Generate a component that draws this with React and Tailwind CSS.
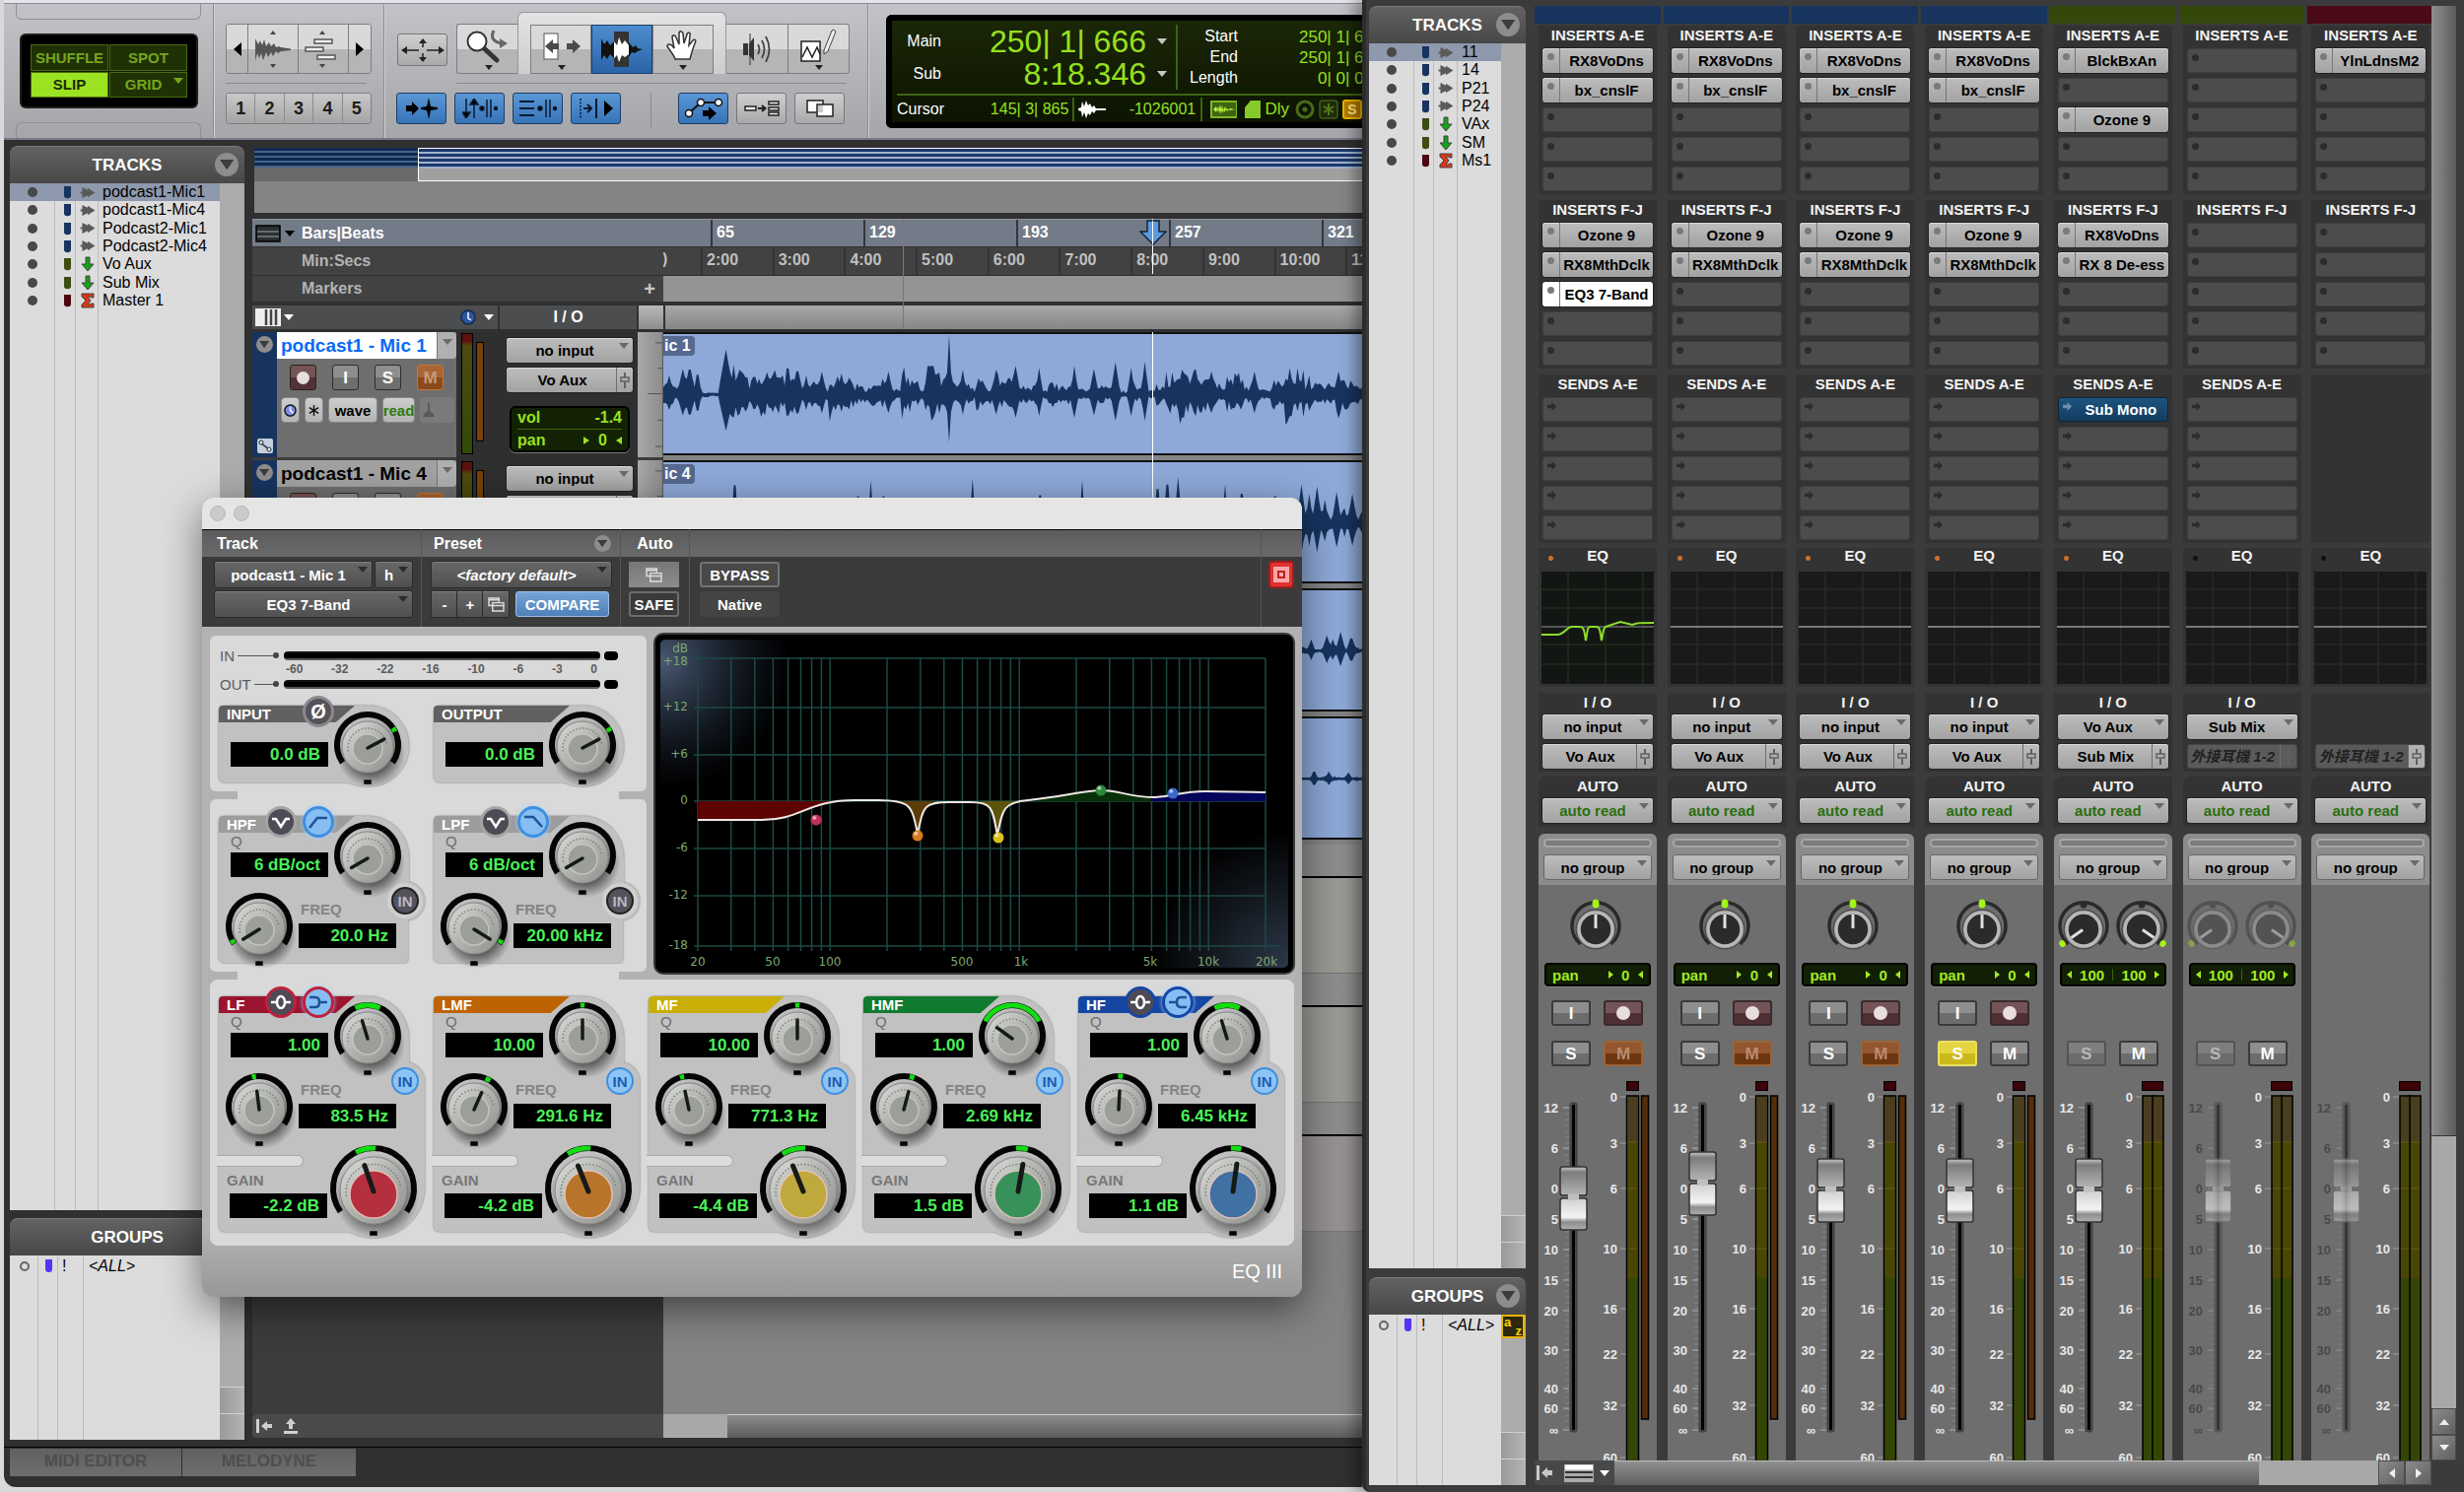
import React from 'react';

const BLUE = '#17345f';

const TRACKS = [
  { name: 'podcast1-Mic1', short: '11', kind: 'audio' },
  { name: 'podcast1-Mic4', short: '14', kind: 'audio' },
  { name: 'Podcast2-Mic1', short: 'P21', kind: 'audio' },
  { name: 'Podcast2-Mic4', short: 'P24', kind: 'audio' },
  { name: 'Vo Aux', short: 'VAx', kind: 'aux' },
  { name: 'Sub Mix', short: 'SM', kind: 'aux' },
  { name: 'Master 1', short: 'Ms1', kind: 'master' }
];

const KIND_COLORS = { audio: BLUE, aux: '#3d4d12', master: '#4c0811' };

const CHANNELS = [
  { id: 'c1', kind: 'audio', a: ['RX8VoDns', 'bx_cnslF'], f: ['Ozone 9', 'RX8MthDclk', 'EQ3 7-Band'], input: 'no input', output: 'Vo Aux', fader: 92, curve: true, led: true, muted: true },
  { id: 'c2', kind: 'audio', a: ['RX8VoDns', 'bx_cnslF'], f: ['Ozone 9', 'RX8MthDclk'], input: 'no input', output: 'Vo Aux', fader: 77, led: true, muted: true },
  { id: 'c3', kind: 'audio', a: ['RX8VoDns', 'bx_cnslF'], f: ['Ozone 9', 'RX8MthDclk'], input: 'no input', output: 'Vo Aux', fader: 84, led: true, muted: true },
  { id: 'c4', kind: 'audio', a: ['RX8VoDns', 'bx_cnslF'], f: ['Ozone 9', 'RX8MthDclk'], input: 'no input', output: 'Vo Aux', fader: 84, led: true, solo: true },
  { id: 'c5', kind: 'aux', a: ['BlckBxAn', '', 'Ozone 9'], f: ['RX8VoDns', 'RX 8 De-ess'], send: 'Sub Mono', input: 'Vo Aux', output: 'Sub Mix', fader: 84, led: true },
  { id: 'c6', kind: 'aux', a: [], f: [], input: 'Sub Mix', output: '外接耳機 1-2', fader: 84, dim: true },
  { id: 'c7', kind: 'master', a: ['YlnLdnsM2'], f: [], output: '外接耳機 1-2', fader: 84, dim: true }
];

const BANDS = [
  { name: 'LF', bg: 'bg-[#9c1530]', cap: '#b4303f', shape: 'low', q: ['1.00', -17, -24, 24], freq: ['83.5 Hz', -7, -14, -6], gain: ['-2.2 dB', -19, -26, 3] },
  { name: 'LMF', bg: 'bg-[#bd6304]', cap: '#b8742a', q: ['10.00', 0, -4, 4], freq: ['291.6 Hz', 24, 22, 32], gain: ['-4.2 dB', -22, -31, 3] },
  { name: 'MF', bg: 'bg-[#c9ae06]', cap: '#bfa93c', q: ['10.00', 0, -4, 4], freq: ['771.3 Hz', -12, -17, -9], gain: ['-4.4 dB', -22, -31, 3] },
  { name: 'HMF', bg: 'bg-[#107a2e]', cap: '#38915a', q: ['1.00', -54, -62, 62], freq: ['2.69 kHz', 15, 11, 20], gain: ['1.5 dB', 10, -3, 14] },
  { name: 'HF', bg: 'bg-[#1646a3]', cap: '#4170a3', shape: 'high', q: ['1.00', -17, -24, 24], freq: ['6.45 kHz', 3, -1, 8], gain: ['1.1 dB', 8, -3, 12] }
];

// small seeded generator so that the wave forms are the same on every render
function makeWave(seed, base, spikes, mid = 63) {
  let s = seed;
  const rnd = () => {
    s = (s * 1103515245 + 12345) % 2147483648;
    return s / 2147483648;
  };
  const amps = [];
  let level = 0.5;
  for (let x = 0; x <= 714; x += 2) {
    // a new syllable starts now and then, and dies away
    if (rnd() < 0.13) level = 0.3 + rnd() * 0.9;
    level *= 0.93;
    let a = base * level * (0.35 + rnd() * 0.9);
    let b = base * level * (0.35 + rnd() * 0.75);
    spikes.forEach(([px, h, w = 5]) => {
      const d = Math.abs(x - px) / w;
      if (d < 1) {
        a = Math.max(a, h * (1 - d * 0.95));
        b = Math.max(b, h * 0.8 * (1 - d * 0.95));
      }
    });
    amps.push([x, Math.max(a, 1), Math.max(b, 1)]);
  }
  const up = amps.map(([x, a]) => `${x} ${(mid - a).toFixed(1)}`);
  const down = amps.reverse().map(([x, , b]) => `${x} ${(mid + b).toFixed(1)}`);
  return `M${up.join('L')}L${down.join('L')}Z`;
}

const WAVES = [
  makeWave(7, 26, [[6, 20], [20, 27, 6], [27, 31, 6], [35, 27, 4], [64, 47, 8], [77, 25], [85, 26, 3], [93, 22, 6], [109, 20, 6], [117, 22, 5], [127, 40, 3], [137, 29, 6], [146, 20, 4], [162, 24, 5], [182, 22, 5], [230, 24], [276, 30, 4], [292, 62, 3], [306, 26, 4], [340, 26, 5], [360, 30, 5], [384, 28, 4], [420, 30, 4], [440, 27, 5], [462, 34, 5], [478, 28, 4], [492, 34, 4], [530, 26, 5], [560, 24, 6], [604, 24, 5], [640, 28, 4]]),
  makeWave(3, 16, [[8, 24, 3], [47, 38, 3], [73, 57, 3], [199, 40, 3], [212, 44, 3], [225, 40, 3], [316, 46, 3], [385, 42, 3], [428, 44, 3], [505, 46, 4], [515, 52, 4], [526, 48, 4], [574, 40, 3], [591, 44, 3], [625, 40, 3], [652, 40, 5], [660, 30, 4], [668, 38, 5], [676, 24, 4], [688, 32, 5], [704, 30, 5]]),
  makeWave(5, 5, [[650, 8, 4], [662, 12, 4], [678, 16, 5], [684, 12, 4], [692, 20, 5], [703, 16, 5]]),
  makeWave(11, 4, [[665, 10, 4], [680, 8, 4], [700, 7, 4]])
];

/* ---------- small shared pieces ---------- */

function Arrow({ className = 'fill-[#6a6a6a]' }) {
  return (
    <svg viewBox="0 0 10 6" className={`w-[10px] h-[6px] shrink-0 ${className}`}>
      <path d="M0 0H10L5 6Z" />
    </svg>
  );
}

function Disclosure({ label, size = 'w-6 h-6' }) {
  return (
    <button aria-label={label} className={`${size} rounded-full bg-[#8d8d8d] flex items-center justify-center`}>
      <svg viewBox="0 0 14 10" className="w-[60%] fill-[#3c3c3c]"><path d="M0 0H14L7 10Z" /></svg>
    </button>
  );
}

function Picker({ label, value, className, text = 'text-black', pad = 'pl-1', fader, faderBg = '', arrow = 'fill-[#6a6a6a]' }) {
  return (
    <div className={`relative rounded-[3px] overflow-hidden ${className}`}>
      <select aria-label={label} className={`appearance-none w-full h-full outline-none font-bold text-[15px] [text-align-last:center] ${pad} ${fader ? 'pr-[19px]' : 'pr-[14px]'} ${text}`}>
        <option>{value}</option>
      </select>
      {fader ? (
        <span className={`absolute right-0 inset-y-0 w-[17px] border-l border-[#6e6e6e] flex items-center justify-center pointer-events-none ${faderBg}`}>
          <svg viewBox="0 0 10 16" className="w-[10px] h-4 stroke-[#606060] fill-none"><path d="M5 0V5M5 10V16" strokeWidth="2" /><rect x="1" y="5" width="8" height="4" strokeWidth="1.5" /></svg>
        </span>
      ) : (
        <span className="absolute right-[4px] top-[5px] pointer-events-none"><Arrow className={arrow} /></span>
      )}
    </div>
  );
}

const LIGHT_BTN = 'bg-linear-to-b from-[#bdbdbd] to-[#a2a2a2] shadow-[inset_0_1px_0_#dadada,0_0_0_1px_#222]';

function KindIcon({ kind }) {
  if (kind === 'aux') {
    return <svg viewBox="0 0 14 16" className="w-[14px] h-[16px]"><path d="M5 1H9V8H13L7 15L1 8H5Z" fill="#18a018" stroke="#444" /></svg>;
  }
  if (kind === 'master') {
    return <svg viewBox="0 0 14 16" className="w-[14px] h-[16px]"><path d="M1 1H13V5H11L9 4H7L10 8L7 12H9L11 11H13V15H1V12L5 8L1 4Z" fill="#d83818" stroke="#444" /></svg>;
  }
  return <svg viewBox="0 0 16 14" className="w-[16px] h-[13px] fill-[#5a5a5a]"><path d="M0 6H2V1L8 4V2L16 7L8 12V10L2 13V8H0Z" /></svg>;
}

function PanelHeader({ title }) {
  return (
    <div className="relative h-[38px] shrink-0 rounded-t-lg bg-linear-to-b from-[#626262] to-[#484848] border-t border-[#7a7a7a] flex items-center justify-center">
      <h2 className="text-[17px] font-bold text-white">{title}</h2>
      <span className="absolute right-[6px] top-[6px]"><Disclosure label={`${title} options`} /></span>
    </div>
  );
}

function ScrollSteps() {
  return (
    <div className="absolute bottom-0 inset-x-0 flex flex-col">
      <button aria-label="Scroll up" className="h-[27px] border-t border-[#d0d0d0] bg-linear-to-r from-[#9a9a9a] to-[#b4b4b4]" />
      <button aria-label="Scroll down" className="h-[27px] border-t border-[#d0d0d0] bg-linear-to-r from-[#9a9a9a] to-[#b4b4b4]" />
    </div>
  );
}

function TrackList({ field, cols }) {
  return (
    <div className="relative flex-1 min-h-0 flex bg-[#dcdcdc]">
      <div className={`absolute inset-y-0 left-0 grid ${cols}`}>
        <i className="border-r border-[#bcbcbc]" /><i className="border-r border-[#bcbcbc]" /><i className="border-r border-[#bcbcbc]" />
      </div>
      <ul className="relative flex-1 h-32 grid grid-rows-7">
        {TRACKS.map((t, i) => (
          <li key={t.name} className={`grid items-center text-[16px] text-black ${cols} ${i === 0 ? 'bg-[#8e99ae]' : ''}`}>
            <span className="justify-self-center w-[10px] h-[10px] rounded-full bg-[#484848]" />
            <svg viewBox="0 0 8 14" className="justify-self-end mr-[5px] w-[7px] h-[14px]"><path d="M0 0H8V11Q8 14 4 14Q0 14 0 11Z" fill={KIND_COLORS[t.kind]} /></svg>
            <span className="justify-self-center"><KindIcon kind={t.kind} /></span>
            <span className="pl-[4px] whitespace-nowrap">{t[field]}</span>
          </li>
        ))}
      </ul>
      <div className="relative w-[25px] bg-[#acacac]"><ScrollSteps /></div>
    </div>
  );
}

function GroupList({ sorted }) {
  return (
    <div className="relative flex h-full bg-[#dcdcdc]">
      <div className="flex-1 relative">
        <div className="absolute inset-y-0 left-0 grid grid-cols-[29px_20px_26px]">
          <i className="border-r border-[#bcbcbc]" /><i className="border-r border-[#bcbcbc]" /><i className="border-r border-[#bcbcbc]" />
        </div>
        <div className="relative h-[21px] grid grid-cols-[29px_20px_26px_1fr] items-center text-[16px] text-black">
          <span className="justify-self-center w-[10px] h-[10px] rounded-full border-2 border-[#666]" />
          <span className="justify-self-center w-[7px] h-[13px] rounded-b bg-[#5533f5]" />
          <span className="pl-[4px]">!</span>
          <span className="pl-[5px] italic">&lt;ALL&gt;</span>
        </div>
      </div>
      <div className="relative w-[25px] bg-[#acacac]">
        {sorted && <button className="w-[24px] h-[24px] border-2 border-[#e8b400] bg-[#2c2812] text-[#ffd400] text-[13px] font-bold leading-[9px]"><span className="block text-left pl-px">a</span><span className="block text-right pr-px">z</span></button>}
        <ScrollSteps />
      </div>
    </div>
  );
}

/* ---------- edit window: tool bar ---------- */

const TOOL = 'flex items-center justify-center bg-linear-to-b from-[#d9d9d9] from-50% to-[#b5b5b5] to-50% border-[#7e7e82]';
const BLUE_TOOL = 'w-[51px] h-8 rounded-[3px] border border-[#1d3d66] bg-linear-to-b from-[#5a97d6] to-[#3674b8] flex items-center justify-center';
const GRAY_TOOL = 'w-[51px] h-8 rounded-[3px] border border-[#77777b] bg-linear-to-b from-[#cfcfcf] to-[#a9a9a9] flex items-center justify-center';

function ModePanel() {
  const cell = 'border border-[#4a6a10] text-[15px] font-bold flex items-center justify-center';
  return (
    <div className="w-[213px] flex flex-col justify-between px-3 border-r border-[#8c8d91] shadow-[1px_0_0_#d2d2d4]">
      <div className="h-4 rounded-b-md border border-t-0 border-[#8f9094]" />
      <div className="ml-1 w-[181px] h-[76px] rounded-md bg-black border-2 border-[#1c1e18] p-[9px]">
        <div className="w-full h-full grid grid-cols-2 gap-px bg-[#0f1a04]">
          <button className={`${cell} bg-[#1f3206] text-[#76a51c]`}>SHUFFLE</button>
          <button className={`${cell} bg-[#1f3206] text-[#76a51c]`}>SPOT</button>
          <button className={`${cell} bg-[#9be322] text-[#1c2b08]`}>SLIP</button>
          <button className={`${cell} gap-3 pl-3 bg-[#1f3206] text-[#76a51c]`}>GRID<Arrow className="fill-[#76a51c] mb-2" /></button>
        </div>
      </div>
      <div className="h-4 rounded-t-md border border-b-0 border-[#8f9094]" />
    </div>
  );
}

function ZoomPanel() {
  return (
    <div className="w-[173px] pl-3 pt-5 border-r border-[#8c8d91] shadow-[1px_0_0_#d2d2d4]">
      <div className="w-[148px] h-[51px] flex rounded-[3px] border border-[#7e7e82] overflow-hidden">
        <button aria-label="Zoom out" className={`${TOOL} w-[22px] border-r`}><svg viewBox="0 0 8 14" className="w-2 h-[14px]"><path d="M8 0V14L0 7Z" /></svg></button>
        <button aria-label="Zoom audio" className={`${TOOL} flex-1 border-r`}>
          <svg viewBox="0 0 38 40" className="w-[38px] h-10">
            <path d="M19 1L22 5H16ZM19 39L22 35H16Z" fill="#444" />
            <path d="M1 9L4 15L6 11L8 16L10 10L12 17L15 13L17 17L20 14L22 18L25 17L27 18L37 19.500V21L27 22L24 24L22 22L19 27L17 23L14 28L12 23L9 31L7 24L5 29L3 24L1 32Z" fill="#555" />
          </svg>
        </button>
        <button aria-label="Zoom MIDI" className={`${TOOL} flex-1 border-r`}>
          <svg viewBox="0 0 38 40" className="w-[38px] h-10">
            <path d="M18 1L21 5H15ZM18 39L21 35H15Z" fill="#444" />
            <g fill="#f2f2f2" stroke="#555" strokeWidth="1.500"><rect x="10" y="10" width="18" height="4" /><rect x="1" y="18" width="18" height="4" /><rect x="13" y="26" width="18" height="4" /></g>
          </svg>
        </button>
        <button aria-label="Zoom in" className={`${TOOL} w-[22px]`}><svg viewBox="0 0 8 14" className="w-2 h-[14px]"><path d="M0 0V14L8 7Z" /></svg></button>
      </div>
      <div className="w-[143px] mt-[9px] h-px bg-[#8a8b8f]" />
      <div className="w-[148px] h-8 mt-[9px] flex rounded-[3px] border border-[#7e7e82] overflow-hidden">
        {[1, 2, 3, 4, 5].map((n) => (
          <button key={n} className="flex-1 bg-linear-to-b from-[#c9c9c9] to-[#a5a5a5] border-r border-[#8c8c8c] last:border-r-0 text-[18px] font-bold text-[#1c1c1c]">{n}</button>
        ))}
      </div>
    </div>
  );
}

function ToolPanel() {
  return (
    <div className="w-[491px] pl-3 pt-2 border-r border-[#8c8d91] shadow-[1px_0_0_#d2d2d4]">
      <div className="flex h-[63px]">
        <button aria-label="Zoom toggle" className="w-[51px] h-[33px] mt-[22px] ml-px rounded-[3px] border border-[#77777b] bg-linear-to-b from-[#cfcfcf] to-[#a9a9a9] flex items-center justify-center">
          <svg viewBox="0 0 44 24" className="w-11 h-6"><path d="M2 12H18M26 12H42M22 4V9M22 15V20" stroke="#222" strokeWidth="1.500" /><path d="M0 12L6 8V16ZM44 12L38 8V16ZM22 0L26 5H18ZM22 24L26 19H18Z" fill="#222" /></svg>
        </button>
        <button aria-label="Zoomer" className={`${TOOL} w-[62px] ml-[9px] mt-3 rounded-l-[3px] border border-r-0`}>
          <svg viewBox="0 0 44 42" className="w-11 h-[42px]">
            <path d="M17 19L31 32" stroke="#333" strokeWidth="5" strokeLinecap="round" />
            <circle cx="11" cy="13" r="9.500" fill="#fff" stroke="#333" strokeWidth="2" />
            <path d="M28 2Q23 12 35 15" stroke="#666" strokeWidth="3" fill="none" /><path d="M34 10V20L42 15Z" fill="#666" />
            <path d="M19 37H27L23 42Z" fill="#222" />
          </svg>
        </button>
        <div className="w-[212px] px-3 pt-3 rounded-t-md border-x border-t border-[#96979a] bg-linear-to-b from-[#e3e3e3] to-[#cdcdcd] flex">
          <button aria-label="Trim" className={`${TOOL} flex-1 border`}>
            <svg viewBox="0 0 44 42" className="w-11 h-[42px]">
              <rect x="5" y="5" width="14" height="26" fill="#fff" stroke="#555" />
              <path d="M6 18L14 11V15H20V21H14V25ZM42 18L34 11V15H28V21H34V25Z" fill="#4a4a4a" /><path d="M19 37H27L23 42Z" fill="#222" />
            </svg>
          </button>
          <button aria-label="Selector" className="flex-1 flex items-center justify-center border border-[#1d3d66] bg-linear-to-b from-[#4d8ccf] to-[#2a64a8]">
            <svg viewBox="0 0 44 36" className="w-11 h-9">
              <rect x="14" y="0" width="15" height="36" fill="#333" />
              <path d="M1 7L4 13L7 9L10 14L14 10V27L10 23L7 28L4 24L1 29ZM29 11L33 16L36 14L38 17L43 18L38 20L35 22L32 21L29 26Z" fill="#111" />
              <path d="M14 10L17 14L19 6L22 13L25 9L29 14V23L25 26L22 24L19 31L17 24L14 27Z" fill="#fff" />
            </svg>
          </button>
          <button aria-label="Grabber" className={`${TOOL} flex-1 border`}>
            <svg viewBox="0 0 40 42" className="w-10 h-[42px]">
              <path d="M12 31C11 27 5 20 4 18C4 15 8 15 11 20L9 9C9 6 12 6 13 9L16 16V5C16 2 19 2 20 5L21 15L24 6C25 3 28 4 27 7L26 17L30 12C32 10 34 12 32 15C30 20 28 27 27 31Z" fill="#fff" stroke="#333" strokeWidth="1.500" /><path d="M16 37H24L20 42Z" fill="#222" />
            </svg>
          </button>
        </div>
        <button aria-label="Scrubber" className={`${TOOL} w-[63px] mt-3 border border-l-0`}>
          <svg viewBox="0 0 32 34" className="w-8 h-[34px]"><path d="M2 11H7V23H2ZM8 11L13 5V29L8 23Z" fill="#333" /><path d="M9 1V33" stroke="#333" /><path d="M17 12Q20 17 17 22M21 8Q26 17 21 26M25 4Q32 17 25 30" fill="none" stroke="#444" strokeWidth="1.800" /></svg>
        </button>
        <button aria-label="Pencil" className={`${TOOL} w-[62px] mt-3 rounded-r-[3px] border border-l-0`}>
          <svg viewBox="0 0 40 42" className="w-10 h-[42px]"><rect x="2" y="13" width="19" height="20" fill="#fff" stroke="#222" strokeWidth="1.500" /><path d="M3 29L8 19L13 29L18 19L21 26" fill="none" stroke="#222" strokeWidth="1.500" /><path d="M25 22L33 2Q35 0 37 3L29 23L25 26Z" fill="#eee" stroke="#444" /><path d="M16 37H24L20 42Z" fill="#222" /></svg>
        </button>
      </div>
      <div className="ml-[61px] w-[396px] mt-[9px] h-px bg-[#8a8b8f]" />
      <div className="flex gap-2 mt-[9px] h-8">
        <button aria-label="Tab to transients" className={BLUE_TOOL}><svg viewBox="0 0 32 22" className="w-8 h-[22px]"><path d="M0 8H6V4L13 11L6 18V14H0Z" /><path d="M15 10L21 9L23 0L25 9L32 10V12L25 13L23 22L21 13L15 12Z" /></svg></button>
        <button aria-label="Link timeline" className={BLUE_TOOL}><svg viewBox="0 0 36 20" className="w-9 h-5" stroke="#0c1a2e" strokeWidth="1.500"><path d="M4 0V16M12 4V20" /><path d="M4 20L0 14H8ZM12 0L8 6H16Z" /><circle cx="20" cy="10" r="2" /><path d="M25 1V19M29 1V19" /><circle cx="34" cy="10" r="1.500" /></svg></button>
        <button aria-label="Link track" className={BLUE_TOOL}><svg viewBox="0 0 38 20" className="w-[38px] h-5" stroke="#0c1a2e" strokeWidth="1.500"><path d="M0 3H15M0 10H15M0 17H15" strokeWidth="2" /><circle cx="21" cy="10" r="2" /><path d="M27 1V19M31 1V19" /><circle cx="36" cy="10" r="1.500" /></svg></button>
        <button aria-label="Insertion follows playback" className={BLUE_TOOL}><svg viewBox="0 0 34 20" className="w-[34px] h-5"><path d="M1 0V20" stroke="#0c1a2e" strokeWidth="1.500" strokeDasharray="2 1.500" /><path d="M4 10H11M8 6L12 10L8 14" stroke="#0c1a2e" strokeWidth="2" fill="none" /><path d="M17 0V20" stroke="#0c1a2e" strokeWidth="2" /><path d="M25 2V18L34 10Z" /></svg></button>
        <span className="w-px h-9 ml-[22px] mr-2 bg-[#8a8b8f]" />
        <button aria-label="Automation follows edit" className={`${BLUE_TOOL} ml-[11px]`}><svg viewBox="0 0 40 24" className="w-10 h-6"><path d="M5 17L17 6H35" fill="none" stroke="#111" strokeWidth="2" /><g fill="#fff" stroke="#111" strokeWidth="1.500"><circle cx="5" cy="17" r="3.500" /><circle cx="17" cy="6" r="3.500" /><circle cx="35" cy="6" r="3.500" /></g><path d="M19 14H25V10L33 17L25 24V20H19Z" /></svg></button>
        <button aria-label="Mirrored editing" className={GRAY_TOOL}><svg viewBox="0 0 36 16" className="w-9 h-4"><g fill="#eee" stroke="#222" strokeWidth="1.500"><rect x="1" y="6" width="11" height="4" /><rect x="25" y="1" width="10" height="3" /><rect x="25" y="7" width="10" height="3" /><rect x="25" y="12" width="10" height="3" /></g><path d="M14 8H21M18 5L21.500 8L18 11" stroke="#222" strokeWidth="2" fill="none" /></svg></button>
        <button aria-label="Layered editing" className={GRAY_TOOL}><svg viewBox="0 0 28 18" className="w-7 h-[18px]"><rect x="1" y="1" width="16" height="12" fill="#fff" stroke="#222" strokeWidth="1.500" /><rect x="11" y="5" width="16" height="12" fill="#fff" stroke="#222" strokeWidth="1.500" /><rect x="12" y="6" width="5" height="7" fill="#ccc" /></svg></button>
      </div>
    </div>
  );
}

function Counter() {
  return (
    <div className="flex-1 min-w-0 ml-[18px] mt-[11px] h-[115px] rounded-l-md border-[6px] border-r-0 border-black bg-linear-to-b from-[#1b2708] to-[#0c1402] pl-[5px] overflow-hidden flex flex-col whitespace-nowrap">
      <div className="h-[76px] shrink-0 flex border-b-2 border-[#3c6410]">
        <dl className="w-[285px] shrink-0 grid grid-cols-[45px_1fr_30px] grid-rows-2 items-center border-r-2 border-[#3c6410] my-1 text-white text-[16px]">
          <dt className="text-right">Main</dt><dd className="text-right text-[32px] text-[#97e01f]">250| 1| 666</dd><Arrow className="fill-[#c8c8c8] ml-[11px]" />
          <dt className="text-right">Sub</dt><dd className="text-right text-[32px] text-[#97e01f]">8:18.346</dd><Arrow className="fill-[#c8c8c8] ml-[11px]" />
        </dl>
        <dl className="grid grid-cols-[61px_160px] gap-y-1 items-center content-center text-white text-[16px]">
          <dt className="text-right">Start</dt><dd className="pl-[62px] text-[17px] text-[#97e01f]">250| 1| 666</dd>
          <dt className="text-right">End</dt><dd className="pl-[62px] text-[17px] text-[#97e01f]">250| 1| 666</dd>
          <dt className="text-right">Length</dt><dd className="pl-[81px] text-[17px] text-[#97e01f]">0| 0| 000</dd>
        </dl>
      </div>
      <div className="flex-1 flex items-center text-[16px] text-[#97e01f]">
        <span className="w-[95px] text-white">Cursor</span>
        <span className="w-[85px] border-r-2 border-[#3c6410] py-1">145| 3| 865</span>
        <svg viewBox="0 0 28 18" className="w-7 h-[18px] ml-1 fill-white"><path d="M0 8L3 7L4 1L6 6L8 0L10 5L12 3L14 7L16 5L18 8H28V10H18L16 13L14 11L12 15L10 13L8 18L6 12L4 17L3 11L0 10Z" /></svg>
        <span className="ml-[24px] w-[74px] border-r-2 border-[#3c6410] py-1">-1026001</span>
        <svg viewBox="0 0 28 18" className="w-7 h-[18px] ml-2"><rect x="1" y="1" width="26" height="16" fill="#3d6312" stroke="#7eb825" strokeWidth="2" /><path d="M3 9L6 6L8 12L10 4L12 13L15 6L17 11L20 8L25 9L20 10L17 8L14 12L12 5L10 14L8 6L6 12Z" fill="#b6f23c" /></svg>
        <svg viewBox="0 0 16 18" className="w-4 h-[18px] ml-2 fill-[#86c92a]"><path d="M0 7L6 0H16V18H0Z" /></svg>
        <span className="ml-1 text-[17px]">Dly</span>
        <svg viewBox="0 0 20 20" className="w-5 h-5 ml-[6px] shrink-0"><circle cx="10" cy="10" r="8" fill="none" stroke="#4a6a1a" strokeWidth="3" /><circle cx="10" cy="10" r="2.500" fill="#4a6a1a" /></svg>
        <svg viewBox="0 0 20 20" className="w-5 h-5 ml-1 shrink-0" stroke="#56781f"><rect x="1" y="1" width="18" height="18" rx="2" fill="#1d2c0a" /><path d="M10 4V16M5 7L15 13M15 7L5 13" strokeWidth="2" /></svg>
        <button className="w-[20px] h-[20px] ml-1 shrink-0 rounded-[3px] bg-[#b57a00] border-2 border-[#e8b400] text-[#ffe680] text-[14px] font-bold">S</button>
      </div>
    </div>
  );
}

/* ---------- edit window: tracks ---------- */

function Rulers() {
  return (
    <div className="mt-[6px] grid grid-cols-[417px_1fr] grid-rows-[28px_28px_26px] gap-y-px text-[16px] font-bold text-[#b4b4b4]">
      <div className="bg-[#737b88] border-t border-[#8f96a2] flex items-center text-white">
        <svg viewBox="0 0 26 18" className="ml-[3px] w-[26px] h-[18px]"><rect x="1" y="1" width="24" height="16" fill="#2c2f34" stroke="#000" strokeWidth="1.500" /><path d="M2 7H24M2 12H24" stroke="#9aa" /></svg>
        <Arrow className="ml-1 fill-black" /><span className="ml-[7px]">Bars|Beats</span>
      </div>
      <div className="bg-[#737b88] border-t border-[#8f96a2] pl-[48px] overflow-hidden text-white flex">
        {['65', '129', '193', '257', '321'].map((b) => (
          <span key={b} className="w-[155px] shrink-0 border-l-2 border-[#33363b] pl-1 pt-[5px]">{b}</span>
        ))}
      </div>
      <div className="bg-[#424242] flex items-center pl-[50px]">Min:Secs</div>
      <div className="bg-[#424242] relative overflow-hidden text-[#c0c0c0]">
        <span className="absolute -left-px top-[4px]">)</span>
        <div className="ml-[38px] w-[727px] h-full grid grid-cols-10">
          {['2:00', '3:00', '4:00', '5:00', '6:00', '7:00', '8:00', '9:00', '10:00', '11:00'].map((m) => (
            <span key={m} className="border-l-2 border-[#333] pl-1 pt-[5px]">{m}</span>
          ))}
        </div>
      </div>
      <div className="bg-[#424242] flex items-center justify-between pl-[50px] pr-2">Markers<button aria-label="Add marker" className="text-[20px] text-[#c8c8c8]">+</button></div>
      <div className="bg-[#949494]" />
    </div>
  );
}

const SQUARE_BOX = 'w-[27px] h-[26px] rounded-[3px] border text-[17px] font-bold flex items-center justify-center bg-linear-to-b from-50% to-50%';
const SQUARE = `${SQUARE_BOX} border-[#2d2d2d] text-white from-[#8e8e8e] to-[#6f6f6f]`;
const SMALL = 'h-[26px] rounded-[4px] border border-[#888] bg-linear-to-b from-[#cdcdcd] to-[#b4b4b4] text-[15px] font-bold flex items-center justify-center';

function EditTrack({ name, clip, wave, active }) {
  return (
    <div className="h-[130px] shrink-0 grid grid-cols-[25px_182px_45px_139px_26px_1fr] gap-0">
      <div className="bg-[#17345f] h-[127px] flex flex-col items-center justify-between pt-1 pb-1">
        <Disclosure label={`${name} options`} size="w-[17px] h-[17px]" />
        <svg viewBox="0 0 16 15" className="w-4 h-[15px]"><rect width="16" height="15" rx="2" fill="#c6cfdd" /><path d="M3 4L12 11" stroke="#123" strokeWidth="1.500" /><circle cx="4" cy="4" r="2" fill="#fff" stroke="#123" /><circle cx="12" cy="11" r="2" fill="#fff" stroke="#123" /></svg>
      </div>
      <div className="bg-[#6e6e6e] h-[127px]">
        <div className="flex h-[27px]">
          <input aria-label="Track name" defaultValue={name} className={`w-[162px] px-1 outline-none text-[19px] font-bold ${active ? 'bg-white text-[#0a6bf5]' : 'bg-[#a2a2a2] text-black'}`} />
          <button aria-label="Playlists" className="flex-1 rounded-r bg-[#b0b0b0] border-l border-[#777] flex justify-center pt-[7px]"><Arrow /></button>
        </div>
        <div className="flex gap-4 mt-[6px] pl-[13px]">
          <button aria-label="Record" className={`${SQUARE_BOX} border-[#2d2020] from-[#745454] to-[#523236]`}><span className="w-[13px] h-[13px] rounded-full bg-[#e8dede]" /></button>
          <button className={SQUARE}>I</button>
          <button className={SQUARE}>S</button>
          <button className={`${SQUARE_BOX} border-[#c07838] from-[#a96534] to-[#8c4a1c] text-[#c89a78]`}>M</button>
        </div>
        <div className="flex gap-[5px] mt-[7px] pl-[4px]">
          <button aria-label="Timebase" className={`${SMALL} w-[19px]`}><svg viewBox="0 0 14 14" className="w-[13px] h-[13px]"><circle cx="7" cy="7" r="6" fill="#7c8ce8" stroke="#111" strokeWidth="1.500" /><path d="M7 3V7L10 10" stroke="#fff" strokeWidth="1.500" fill="none" /></svg></button>
          <button aria-label="Elastic audio" className={`${SMALL} w-[19px]`}><svg viewBox="0 0 14 14" className="w-[13px] h-[13px]" stroke="#111" strokeWidth="1.500"><path d="M7 1V13M2 4L12 10M12 4L2 10" /></svg></button>
          <button className={`${SMALL} w-[50px] text-black`}>wave</button>
          <button className={`${SMALL} w-[33px] text-[#2a7a10]`}>read</button>
          <span className="w-[35px] h-[26px] rounded-[4px] bg-[#7a7a7a] flex items-center pl-[3px]"><svg viewBox="0 0 12 14" className="w-3 h-[14px] fill-[#585858]"><path d="M5 0H7V8Q11 10 12 14H0Q1 10 5 8Z" /></svg></span>
        </div>
      </div>
      <div className="bg-[#2f2f2f] flex gap-[3px] pl-[5px]">
        <span className="w-3 h-[123px] mt-px border border-black bg-linear-to-b from-[#5c1010] from-6% via-[#4e4a10] via-10% to-[#2f4a08]" />
        <span className="w-2 h-[101px] mt-[10px] border border-black bg-[#784208]" />
      </div>
      <div className="bg-[#2f2f2f] pt-[6px] pl-[6px] pr-[5px]">
        <Picker label={`${name} input`} value="no input" className={`h-[25px] ${LIGHT_BTN}`} />
        <Picker label={`${name} output`} value="Vo Aux" fader className={`h-[25px] mt-[5px] ${LIGHT_BTN}`} />
        <div className="mt-[14px] mx-[3px] h-[47px] rounded-md border-2 border-black bg-[#132205] shadow-[0_1px_0_#777] px-[6px] text-[16px] font-bold text-[#97e01f] flex flex-col justify-center">
          <div className="flex justify-between border-b border-[#3c6410] pb-[3px]"><span>vol</span><span>-1.4</span></div>
          <div className="flex justify-between items-center pt-[3px]"><span className="w-[58px]">pan</span><i className="border-y-4 border-l-[6px] border-y-transparent border-l-[#97e01f]" /><span>0</span><i className="border-y-4 border-r-[6px] border-y-transparent border-r-[#97e01f]" /></div>
        </div>
      </div>
      <svg viewBox="0 0 26 128" className="w-[26px] h-[127px] bg-linear-to-r from-[#a8a8a8] to-[#8c8c8c]"><path d="M18 11H26M20 37H26M10 63H26M20 90H26M18 117H26M25.500 0V128" stroke="#555" fill="none" /></svg>
      <div className="relative h-[125px] border-y-2 border-[#111] bg-[#8ea9d8] overflow-hidden">
        <svg viewBox="0 0 714 124" preserveAspectRatio="none" className="w-full h-full"><path d="M0 62.500H714" stroke={BLUE} strokeWidth="2" /><path d={wave} fill={BLUE} /></svg>
        <span className="absolute left-0 top-[2px] h-5 pl-[1px] pr-1 rounded-r bg-[#56698e] text-white text-[16px] font-bold leading-5">{clip}</span>
      </div>
    </div>
  );
}

function AuxLane({ body }) {
  return (
    <div className="h-[131px] shrink-0 grid grid-cols-[417px_1fr]">
      <div className="bg-[#4a4a4a]" />
      <div className="flex flex-col">
        <div className="h-[34px] bg-linear-to-r from-[#a6a6a6] to-[#8c8c8c] border-b-2 border-black" />
        <div className={`flex-1 border-b border-[#777] ${body}`} />
      </div>
    </div>
  );
}

function EditWindow() {
  return (
    <section className="flex-1 min-w-0 ml-1 mb-[5px] flex flex-col rounded-bl-xl overflow-hidden bg-[#303030]">
      <div className="h-1 shrink-0 bg-[#e4e4ea] border-b border-[#8a8aa0]" />
      <header className="h-[138px] shrink-0 flex bg-linear-to-b from-[#c2c3c6] to-[#a5a6aa] border-b-2 border-[#77788a]">
        <ModePanel />
        <ZoomPanel />
        <ToolPanel />
        <Counter />
      </header>

      <div className="flex-1 min-h-0 flex">
        <aside className="w-[238px] shrink-0 ml-[6px] pt-[6px] pb-[7px] flex flex-col">
          <PanelHeader title="TRACKS" />
          <TrackList field="name" cols="grid-cols-[46px_21px_23px_1fr]" />
          <div className="h-2" />
          <PanelHeader title="GROUPS" />
          <div className="h-[187px] shrink-0"><GroupList /></div>
        </aside>

        <div className="relative flex-1 min-w-0 ml-2 pt-2 pb-[9px] flex flex-col">
          {/* session overview */}
          <div className="relative h-[66px] shrink-0 ml-[2px] bg-[#848484]">
            <div className="h-[34px] w-[166px] bg-[#6a6a6a]"><div className="h-5 bg-[repeating-linear-gradient(to_bottom,#0f2a50_0_3px,#45618a_3px_5px)]" /></div>
            <div className="absolute left-[166px] right-0 top-0 h-[34px] bg-[#a0a0a0] border border-r-0 border-white"><div className="h-5 bg-[repeating-linear-gradient(to_bottom,#1c3a6c_0_3px,#a0b2cf_3px_5px)]" /></div>
          </div>
          <Rulers />
          <div className="mt-1 h-6 shrink-0 grid grid-cols-[249px_139px_25px_1fr] gap-x-[2px] text-[16px] font-bold text-white">
            <div className="bg-[#4c4d4f] flex items-center">
              <svg viewBox="0 0 26 18" className="ml-[3px] w-[26px] h-[18px]"><rect width="26" height="18" fill="#eee" /><path d="M11 1V17M16 1V17M21 1V17" stroke="#444" strokeWidth="2.500" /></svg>
              <Arrow className="fill-white ml-[3px]" />
              <svg viewBox="0 0 16 16" className="ml-auto w-4 h-4"><circle cx="8" cy="8" r="7" fill="#2c56a0" stroke="#16294a" strokeWidth="1.500" /><path d="M8 3V9L11 11" stroke="#fff" fill="none" strokeWidth="1.500" /></svg>
              <Arrow className="fill-white ml-2 mr-1" />
            </div>
            <div className="bg-[#4c4d4f] flex items-center justify-center">I / O</div>
            <div className="bg-linear-to-b from-[#b8b8b8] to-[#8e8e8e]" />
            <div className="bg-linear-to-b from-[#a8a8a8] to-[#868686]" />
          </div>
          <div className="mt-[3px] flex-1 min-h-0 overflow-hidden flex flex-col bg-linear-to-r from-[#3c3c3c] from-[417px] to-[#848484] to-[417px]">
            <EditTrack name="podcast1 - Mic 1" clip="ic 1" wave={WAVES[0]} active />
            <EditTrack name="podcast1 - Mic 4" clip="ic 4" wave={WAVES[1]} />
            <EditTrack name="Podcast2 - Mic 1" clip="ic 1" wave={WAVES[2]} />
            <EditTrack name="Podcast2 - Mic 4" clip="ic 4" wave={WAVES[3]} />
            <AuxLane body="bg-[#989a94]" />
            <AuxLane body="bg-[#989a94]" />
            <AuxLane body="bg-[#979292]" />
          </div>
          <div className="h-6 shrink-0 grid grid-cols-[417px_65px_1fr]">
            <div className="bg-[#4a4a4a] rounded-l flex items-center gap-3 pl-1">
              <button aria-label="Go to start"><svg viewBox="0 0 16 14" className="w-4 h-[14px] fill-[#cfcfcf]"><path d="M0 0H3V14H0ZM5 7L11 2V5H16V9H11V12Z" /></svg></button>
              <button aria-label="Export"><svg viewBox="0 0 14 16" className="w-[14px] h-4 fill-[#cfcfcf]"><path d="M0 13H14V16H0ZM7 0L12 6H9V11H5V6H2Z" /></svg></button>
            </div>
            <div className="bg-[#a8a8a8]" />
            <div className="border-t border-[#c8c8c8] bg-linear-to-b from-[#8c8c8c] to-[#5c5c5c]" />
          </div>
          {/* selection start and play position */}
          <span className="absolute left-[660px] top-[80px] w-px h-[112px] bg-[#e0503a]" />
          <span className="absolute left-[913px] top-[80px] w-px h-[56px] bg-white" />
          <span className="absolute left-[913px] top-[195px] w-px h-[180px] bg-white" />
          <svg viewBox="0 0 28 26" className="absolute left-[900px] top-[81px] w-7 h-[26px]"><path d="M8 1H20V12H27L14 25L1 12H8Z" fill="#5b9ae0" stroke="#12243c" strokeWidth="1.500" /><path d="M13.500 1V25" stroke="#fff" strokeWidth="1" /></svg>
        </div>
      </div>

      <nav className="h-[41px] shrink-0 border-t border-black pl-[6px] flex gap-px text-[17px] font-bold text-[#4e4e4e]">
        <button className="w-[174px] h-7 mt-px bg-linear-to-b from-[#606060] to-[#6e6e6e] pb-1">MIDI EDITOR</button>
        <button className="w-[176px] h-7 mt-px bg-linear-to-b from-[#606060] to-[#6e6e6e] pb-1">MELODYNE</button>
      </nav>
    </section>
  );
}

/* ---------- mix window ---------- */

function Slot({ name, selected }) {
  if (!name) {
    return <button aria-label="Empty insert" className="h-[25px] rounded-[3px] bg-[#4c4c4c] border border-[#3e3e3e] pl-1 pb-[6px]"><span className="block w-[7px] h-[7px] rounded-full bg-[#2c2c2c]" /></button>;
  }
  return (
    <div className={`h-[25px] rounded-[3px] overflow-hidden flex ${selected ? 'bg-white shadow-[0_0_0_1px_#222]' : LIGHT_BTN}`}>
      <button aria-label={`Open ${name}`} className="w-[18px] shrink-0 border-r border-[#777] pl-[5px] pb-2"><span className="block w-[7px] h-[7px] rounded-full bg-[#7a7a7a]" /></button>
      <button className="flex-1 text-[15px] font-bold text-black whitespace-nowrap">{name}</button>
    </div>
  );
}

function SendSlot({ name }) {
  return (
    <button aria-label={name || 'Empty send'} className={`relative h-[25px] rounded-[3px] border text-[15px] font-bold text-white pl-4 ${name ? 'bg-linear-to-b from-[#1d5480] to-[#123c5e] border-[#0c2438]' : 'bg-[#4c4c4c] border-[#3e3e3e]'}`}>
      <svg viewBox="0 0 10 10" className={`absolute left-1 top-1 w-[9px] h-[9px] ${name ? 'fill-[#6b8fb0]' : 'fill-[#2c2c2c]'}`}><path d="M0 3H5V0L10 5L5 10V7H0Z" /></svg>
      {name}
    </button>
  );
}

const STRIP_TITLE = 'h-5 leading-[19px] text-center text-[15px] font-bold text-[#f2f2f2]';

function SlotSection({ title, items }) {
  return (
    <div className="bg-[#333] px-[4px] pb-[3px]">
      <h3 className={`${STRIP_TITLE} mb-[3px]`}>{title}</h3>
      <div className="flex flex-col gap-[5px]">
        {[0, 1, 2, 3, 4].map((i) => <Slot key={i} name={items[i]} selected={items[i] === 'EQ3 7-Band'} />)}
      </div>
    </div>
  );
}

function PanKnob({ angle, led, dim }) {
  return (
    <svg viewBox="0 0 56 60" className={`w-14 h-[60px] ${dim ? 'opacity-40' : ''}`} role="slider" aria-label="Pan" aria-valuenow={angle}>
      <path d="M12.500 48A24 24 0 1 1 43.500 48" fill="none" stroke="#2a2a2a" strokeWidth="3.500" />
      <circle cx="28" cy="33" r="17" fill="#2b2b2b" stroke="#b8b8b8" strokeWidth="3.500" />
      <circle cx="28" cy="33" r="20" fill="none" stroke="#444" />
      <path d="M28 32V18" stroke="#e0e0e0" strokeWidth="3" transform={`rotate(${angle} 28 33)`} />
      {angle !== 0 && <circle cx="28" cy="8" r="3.500" fill="#2a2a2a" />}
      <ellipse cx="28" cy="7" rx="3.500" ry={angle ? 3 : 4.500} fill={led} transform={`rotate(${angle} 28 33)`} />
    </svg>
  );
}

const FADER_MARKS = [['12', 32], ['6', 73], ['0', 114], ['5', 145], ['10', 176], ['15', 207], ['20', 238], ['30', 278], ['40', 317], ['60', 337], ['∞', 359]];
const METER_MARKS = [['0', 21], ['3', 68], ['6', 114], ['10', 175], ['16', 236], ['22', 282], ['32', 334], ['60', 387]];

function MeterBar({ x, w }) {
  return (
    <g>
      <rect x={x} y="20" width={w} height="372" fill="#344606" stroke="#000" strokeWidth="1.500" />
      <rect x={x + 1} y="21" width={w - 2} height="184" fill="#4a4604" />
      <rect x={x + 1} y="21" width={w - 2} height="46" fill="#4b3d20" />
      <path d={`M${x + 1} 67H${x + w - 1}M${x + 1} 114H${x + w - 1}M${x + 1} 175H${x + w - 1}`} stroke="#6a5c0c" />
    </g>
  );
}

function Fader({ ch }) {
  const stereo = ch.kind !== 'audio';
  const minor = [];
  for (let y = 38; y < 358; y += 6) minor.push(y);
  return (
    <div className="relative mt-[10px] flex-1 min-h-0 overflow-hidden">
      <svg viewBox="0 0 120 392" className="w-[120px] h-[392px] text-[13px] font-bold">
        <g opacity={ch.dim ? 0.5 : 1}>
          <path d={minor.map((y) => `M27 ${y}H32`).join('')} stroke="#858585" />
          {FADER_MARKS.map(([t, y]) => (
            <g key={t}>
              <text x="20" y={y + 5} textAnchor="end" fill={ch.dim ? '#222' : '#e8e8e8'}>{t}</text>
              <path d={`M25 ${y}H31`} stroke="#b0b0b0" />
            </g>
          ))}
          <rect x="32" y="27" width="7" height="334" rx="2" fill="#4a4a4a" stroke="#3c3c3c" />
          <path d="M35.500 29V359" stroke="#000" strokeWidth="3" />
        </g>
        {METER_MARKS.map(([t, y]) => (
          <g key={t}>
            <text x="80" y={y + 5} textAnchor="end" fill="#e8e8e8">{t}</text>
            <path d={`M83 ${y}H89`} stroke="#a0a0a0" />
          </g>
        ))}
        <rect x="89.500" y="5.500" width={stereo ? 21 : 12} height="9" fill="#3c0408" stroke="#000" />
        {stereo ? <><MeterBar x={90} w={11} /><MeterBar x={100} w={11} /></> : <><MeterBar x={89.5} w={12} /><rect x="104.500" y="20" width="7" height="328" fill="#542e08" stroke="#000" strokeWidth="1.500" /></>}
        <defs>
          <linearGradient id="capTop" x2="0" y2="1"><stop offset="0" stopColor="#c8c8c8" /><stop offset=".2" stopColor="#7c7c7c" /><stop offset="1" stopColor="#b4b4b4" /></linearGradient>
          <linearGradient id="capBottom" x2="0" y2="1"><stop offset="0" stopColor="#d0d0d0" /><stop offset=".6" stopColor="#f4f4f4" /><stop offset=".75" stopColor="#8c8c8c" /><stop offset="1" stopColor="#b0b0b0" /></linearGradient>
        </defs>
        <g transform={`translate(22 ${ch.fader})`} stroke={ch.dim ? '#6a6a6a' : '#333'} strokeWidth="1.500" opacity={ch.dim ? 0.6 : 1}>
          <rect x="0" y="0" width="27" height="29" rx="2.500" fill="url(#capTop)" />
          <rect x="0" y="32" width="27" height="32" rx="2.500" fill="url(#capBottom)" />
          <rect x="8" y="28" width="11" height="6" fill="#c0c0c0" stroke="none" />
        </g>
      </svg>
      <input type="range" aria-label="Volume" disabled={ch.dim} className="absolute left-[22px] top-[27px] w-7 h-[334px] opacity-0 [writing-mode:vertical-lr]" />
    </div>
  );
}

const MIX_BTN = 'w-10 h-[26px] rounded-[3px] border-2 text-[17px] font-bold flex items-center justify-center bg-linear-to-b from-50% to-50%';
const MIX_GRAY = 'border-[#3a3a3a] text-white from-[#8e8e8e] to-[#6c6c6c]';
const MIX_MUTED = 'border-[#9a6238] text-[#b98c70] from-[#94562c] to-[#6c3610]';
const MIX_SOLO = 'border-[#e8e060] text-white from-[#e4d440] to-[#cdb81c]';
const MIX_REC = 'border-[#3a2a2c] from-[#745458] to-[#4e3034]';
const LCD_SMALL = 'h-6 mx-[6px] rounded border-2 border-black bg-[#111f04] shadow-[0_1px_0_#8a8a8a] text-[15px] font-bold text-[#a2ea24] flex items-center';

function ChannelStrip({ ch }) {
  const audio = ch.kind === 'audio';
  const master = ch.kind === 'master';
  const colors = { audio: 'bg-[#17345f]', aux: 'bg-[#34480c]', master: 'bg-[#4a0a18]' };
  return (
    <div className="flex flex-col min-w-0 min-h-0 h-full overflow-hidden">
      <div className={`h-[18px] shrink-0 mr-[3px] ${colors[ch.kind]}`} />
      <div className="ml-1 w-[120px] mt-[2px] flex-1 min-h-0 flex flex-col">
        <SlotSection title="INSERTS A-E" items={ch.a} />
        <div className="h-[6px] shrink-0" />
        <SlotSection title="INSERTS F-J" items={ch.f} />
        <div className="h-[6px] shrink-0" />
        <div className="h-[171px] shrink-0 bg-[#333] px-[4px]">
          {!master && (
            <>
              <h3 className={`${STRIP_TITLE} mb-[3px]`}>SENDS A-E</h3>
              <div className="flex flex-col gap-[5px]">
                {[0, 1, 2, 3, 4].map((i) => <SendSlot key={i} name={i === 0 ? ch.send : ''} />)}
              </div>
            </>
          )}
        </div>
        <div className="mt-[5px] bg-[#333] px-[3px] pb-[3px]">
          <div className="relative h-4 leading-[15px] text-center text-[15px] font-bold text-[#f2f2f2]">
            <span className={`absolute left-[7px] top-2 w-[5px] h-[5px] rounded-full ${ch.led ? 'bg-[#d0702c]' : 'bg-[#111]'}`} />EQ
          </div>
          <svg viewBox="0 0 114 114" className="mt-2 w-[114px] h-[114px]">
            <rect width="114" height="114" fill={ch.curve ? '#131713' : '#1a1a1a'} />
            <path d="M27 0V114M65 0V114M103 0V114M0 18H114M0 37H114M0 74H114M0 94H114" stroke={ch.curve ? '#222c1e' : '#2a2a2a'} strokeWidth="1.500" />
            <path d="M0 56H114" stroke={ch.curve ? '#6c6c6c' : '#9a9a9a'} strokeWidth="1.500" />
            {ch.curve && <path d="M0 64H16C24 64 25 56 31 56H38C44 56 43 60 45 70C47 60 46 56 50 56H55C60 56 59 60 61 70C63 60 62 56 68 55L80 51L92 54C98 52 98 52 114 52" fill="none" stroke="#8cdc2c" strokeWidth="2" />}
          </svg>
        </div>
        <div className="mt-[6px] bg-[#333] h-20 shrink-0 px-[4px]">
          <h3 className={`${STRIP_TITLE} mb-[2px]`}>{master ? '' : 'I / O'}</h3>
          {master ? <div className="h-[25px]" /> : <Picker label="Input" value={ch.input} className={`h-[25px] ${LIGHT_BTN}`} />}
          {ch.dim
            ? <Picker label="Output" value={ch.output} fader faderBg={master ? 'bg-[#b0b0b0]' : ''} pad="pl-0" className="h-[25px] mt-[5px] bg-[#5a5a5a] border border-[#454545]" text="text-[#222] italic" />
            : <Picker label="Output" value={ch.output} fader className={`h-[25px] mt-[5px] ${LIGHT_BTN}`} />}
        </div>
        <div className="mt-[5px] bg-[#333] h-[51px] shrink-0 px-[4px] rounded-tl-lg">
          <h3 className={`${STRIP_TITLE} mb-[2px]`}>AUTO</h3>
          <Picker label="Automation mode" value="auto read" className={`h-[25px] ${LIGHT_BTN}`} text="text-[#2a6f10]" />
        </div>
        <div className="mt-[7px] h-[52px] shrink-0 rounded-t-md bg-[#8c8c8c] pt-[5px] px-[5px]">
          <div className="h-[9px] rounded border-2 border-[#a6a6a6] bg-[#7c7c7c]" />
          <Picker label="Group" value="no group" className="h-[26px] mt-[7px] bg-linear-to-b from-[#bdbdbd] to-[#a2a2a2] border border-[#666]" />
        </div>
        <div className="flex-1 min-h-0 bg-[#6e6e6e] flex flex-col">
          <div className="h-[79px] shrink-0 flex justify-center gap-[3px] pt-3">
            {audio && <span className="mr-1"><PanKnob angle={0} led="#a4f418" /></span>}
            {ch.kind === 'aux' && <><PanKnob angle={-124} led="#a4f418" dim={ch.dim} /><PanKnob angle={124} led="#a4f418" dim={ch.dim} /></>}
          </div>
          {audio && (
            <div className={`${LCD_SMALL} justify-between px-[6px]`}>
              <span className="w-[48px]">pan</span><i className="border-y-4 border-l-[5px] border-y-transparent border-l-[#a2ea24]" /><span>0</span><i className="border-y-4 border-r-[5px] border-y-transparent border-r-[#a2ea24]" />
            </div>
          )}
          {ch.kind === 'aux' && (
            <div className={`${LCD_SMALL} justify-between px-[5px]`}>
              <i className="border-y-4 border-r-[5px] border-y-transparent border-r-[#a2ea24]" /><span>100</span><i className="w-px h-3 bg-[#3c6410]" /><span>100</span><i className="border-y-4 border-l-[5px] border-y-transparent border-l-[#a2ea24]" />
            </div>
          )}
          {master && <div className="h-6" />}
          <div className="mt-[14px] h-[26px] shrink-0 flex gap-[13px] pl-[13px]">
            {audio && <><button className={`${MIX_BTN} ${MIX_GRAY}`}>I</button><button aria-label="Record" className={`${MIX_BTN} ${MIX_REC}`}><span className="w-[14px] h-[14px] rounded-full bg-[#e8dede]" /></button></>}
          </div>
          <div className="mt-[15px] h-[26px] shrink-0 flex gap-[13px] pl-[13px]">
            {audio && <button className={`${MIX_BTN} ${ch.solo ? MIX_SOLO : MIX_GRAY}`}>S</button>}
            {ch.kind === 'aux' && <button disabled className={`${MIX_BTN} ${MIX_GRAY} opacity-50`}>S</button>}
            {!master && <button className={`${MIX_BTN} ${ch.muted ? MIX_MUTED : MIX_GRAY}`}>M</button>}
          </div>
          <Fader ch={ch} />
        </div>
      </div>
    </div>
  );
}

const SCROLL_BTN = 'flex items-center justify-center bg-linear-to-br from-[#8c8c8c] to-[#606060] border border-[#4c4c4c]';

function MixWindow() {
  return (
    <section className="relative w-[1118px] shrink-0 bg-[#3b3b3b] border-l-4 border-[#2c2c2c] rounded-bl-lg pt-[6px] pb-[7px] pl-[3px] pr-2 flex shadow-[-8px_0_14px_rgba(0,0,0,0.35)]">
      <aside className="w-[159px] shrink-0 flex flex-col">
        <PanelHeader title="TRACKS" />
        <TrackList field="short" cols="grid-cols-[46px_20px_24px_1fr]" />
        <div className="h-[9px]" />
        <PanelHeader title="GROUPS" />
        <div className="h-[173px] shrink-0"><GroupList sorted /></div>
      </aside>
      <div className="flex-1 min-w-0 ml-[9px] flex flex-col">
        <div className="flex-1 min-h-0 flex">
          <div className="flex-1 min-w-0 -mr-[5px] grid grid-cols-7 grid-rows-1 min-h-0">
            {CHANNELS.map((ch) => <ChannelStrip key={ch.id} ch={ch} />)}
          </div>
          <div className="relative w-[25px] shrink-0 flex flex-col">
            <div className="h-[1147px] border-b border-[#333] bg-linear-to-r from-[#909090] to-[#5c5c5c]" />
            <div className="flex-1 bg-[#a8a8a8]" />
            <button aria-label="Scroll up" className={`${SCROLL_BTN} h-[27px]`}><Arrow className="fill-[#eee] rotate-180" /></button>
            <button aria-label="Scroll down" className={`${SCROLL_BTN} h-[26px]`}><Arrow className="fill-[#eee]" /></button>
          </div>
        </div>
        <div className="h-[25px] shrink-0 mr-[25px] flex">
          <div className="w-[81px] bg-[#484848] flex items-center pl-[2px]">
            <svg viewBox="0 0 16 15" className="w-4 h-[15px] fill-[#c8c8c8]"><path d="M0 0H3V15H0ZM5 7.500L11 2V5H16V10H11V13Z" /></svg>
            <svg viewBox="0 0 30 18" className="ml-3 w-[30px] h-[18px]"><rect width="30" height="18" fill="#aaa" /><path d="M1 3H29" stroke="#fff" strokeWidth="5" /><path d="M1 8H29M1 13H29" stroke="#333" strokeWidth="2" /></svg>
            <Arrow className="fill-white ml-[6px]" />
          </div>
          <div className="flex-1 border-t border-[#bbb] bg-linear-to-b from-[#909090] to-[#5f5f5f]" />
          <div className="w-[121px] bg-[#a8a8a8]" />
          <button aria-label="Scroll left" className={`${SCROLL_BTN} w-[27px]`}><Arrow className="fill-[#eee] rotate-90" /></button>
          <button aria-label="Scroll right" className={`${SCROLL_BTN} w-[27px]`}><Arrow className="fill-[#eee] -rotate-90" /></button>
        </div>
      </div>
    </section>
  );
}

/* ---------- EQ plug-in window ---------- */

function arc(cx, cy, r, from, to) {
  const pt = (deg) => {
    const a = (deg * Math.PI) / 180;
    return `${(cx + r * Math.sin(a)).toFixed(2)} ${(cy - r * Math.cos(a)).toFixed(2)}`;
  };
  return `M${pt(from)}A${r} ${r} 0 ${to - from > 180 ? 1 : 0} 1 ${pt(to)}`;
}

function Knob({ angle, green, cap, label }) {
  const R = cap ? 41 : 31;
  const c = cap ? 50 : 40;
  const body = cap ? 34 : 26;
  const inner = cap ? 24 : 15;
  return (
    <svg viewBox={cap ? '0 0 100 100' : '0 0 80 80'} className={`overflow-visible shrink-0 ${cap ? 'w-[100px] h-[100px]' : 'w-20 h-20'}`} role="slider" aria-label={label} aria-valuenow={angle}>
      <defs>
        <linearGradient id="metal" x2="1" y2="1"><stop offset="0" stopColor="#dcdedb" /><stop offset=".45" stopColor="#b4b6b2" /><stop offset="1" stopColor="#8f918c" /></linearGradient>
        <radialGradient id="knobShade"><stop offset=".6" stopColor="#000" stopOpacity=".5" /><stop offset="1" stopColor="#000" stopOpacity="0" /></radialGradient>
      </defs>
      <circle cx={c + 3} cy={c + 8} r={body + 9} fill="url(#knobShade)" />
      <path d={arc(c, c, R, -125, 125)} fill="none" stroke="#050505" strokeWidth="6" />
      {green && <path d={arc(c, c, R, green[0], green[1])} fill="none" stroke="#14dc14" strokeWidth="5" />}
      <circle cx={c} cy={c + 2} r={body} fill="url(#metal)" stroke="#8a8a8a" />
      <path d={arc(c, c + 3, body - 6, -100, 80)} fill="none" stroke="#6f716c" strokeWidth="1.500" strokeDasharray="1.500 2" opacity=".8" />
      <circle cx={c} cy={c + (cap ? 6 : 4)} r={inner} fill={cap || '#9c9e99'} stroke={cap ? '#f0c8c0' : '#c9cbc6'} strokeWidth="1.500" strokeOpacity=".8" />
      <path d={`M${c} ${c + 3}V${c - (cap ? 25 : 16)}`} stroke="#161a16" strokeWidth={cap ? 5 : 3.5} strokeLinecap="round" transform={`rotate(${angle} ${c} ${c + 3})`} />
      <rect x={c - 4} y={c + R + (cap ? 2 : 4)} width="8" height="5" fill="#050505" stroke="#999" strokeWidth=".500" />
    </svg>
  );
}

function Lcd({ id, value }) {
  return <input id={id} defaultValue={value} className="block w-[99px] h-[25px] bg-black text-right pr-[8px] text-[17px] font-bold text-[#4cf058] outline-none" />;
}

const ROUND = 'absolute w-[32px] h-[32px] rounded-full border-[3px] flex items-center justify-center';

function InButton({ on }) {
  return (
    <button className={`absolute left-[175px] top-[72px] w-7 h-7 rounded-full text-[15px] font-bold flex items-center justify-center border-2 ${on ? 'bg-[#8cc4f6] border-[#3f8fe0] text-[#1d5bb0]' : 'bg-[#55525c] border-[#222] text-[#b8b8c4] shadow-[0_0_0_4px_#cfcfcf]'}`}>IN</button>
  );
}

function ShapeButtons({ kind }) {
  const light = kind === 'hpf' || kind === 'lpf';
  const ring = { hpf: 'border-[#a4a4a4]', lpf: 'border-[#a4a4a4]', low: 'border-[#c0203c]', high: 'border-[#1646a3]' }[kind];
  const paths = {
    hpf: 'M2 17L10 7H20',
    lpf: 'M2 6H11L20 16',
    low: 'M2 6H8Q12 6 12 11H20M2 16H8Q12 16 12 11',
    high: 'M20 6H14Q10 6 10 11H2M20 16H14Q10 16 10 11'
  };
  return (
    <>
      <button aria-label="Notch" className={`${ROUND} left-[47px] -top-[10px] bg-[#4e4b57] ${ring}`}>
        <svg viewBox="0 0 22 22" className="w-[22px] h-[22px]" fill="none" stroke="#fff" strokeWidth="2.500">{light ? <path d="M2 8H6L11 16L16 8H20" /> : <><path d="M1 11H7M15 11H21" /><ellipse cx="11" cy="11" rx="4" ry="6" /></>}</svg>
      </button>
      <button aria-label="Shelf" className={`${ROUND} left-[85px] -top-[10px] bg-[#86bdf2] ${light ? 'border-[#3f8fe0]' : ring} shadow-[0_0_4px_#9fd0ff]`}>
        <svg viewBox="0 0 22 22" className="w-[22px] h-[22px]" fill="none" stroke="#1b5396" strokeWidth="2.500"><path d={paths[kind]} /></svg>
      </button>
    </>
  );
}

// one block of the plug-in: trim, filter or band, by the rows it is given
function EqBlock({ title, headBg, q, freq, gain, cap, shape, on, phase }) {
  const id = title.toLowerCase();
  const tall = gain ? 'h-[239px]' : freq ? 'h-[149px]' : 'h-[78px]';
  return (
    <div className={`relative w-[210px] shrink-0 ${tall}`}>
      <div className="absolute inset-0 filter-[drop-shadow(0_0_1px_#777)]">
        <div className="absolute left-0 top-0 w-[150px] h-full rounded-md bg-[#c1c1c1]" />
        <div className={`absolute left-[109px] top-0 w-[84px] bg-[#c1c1c1] ${freq ? 'h-[100px] rounded-t-full' : 'h-[82px] rounded-full'}`} />
        {freq && <div className={`absolute left-0 top-[69px] h-20 bg-[#c1c1c1] ${gain ? 'w-[192px] rounded-l' : 'w-[192px] rounded-bl-[40px] rounded-br'}`} />}
        {freq && <div className="absolute left-[170px] top-[67px] w-[39px] h-[39px] rounded-full bg-[#c1c1c1]" />}
        {gain && <div className="absolute left-[105px] top-[84px] w-[104px] h-[161px] rounded-b-full bg-[#c1c1c1]" />}
      </div>
      {gain && <div className="absolute left-[-2px] top-[161px] w-[88px] h-3 rounded-r-full bg-[#dcdcdc] border border-l-0 border-[#a8a8a8]" />}
      <div className="relative flex h-[72px]">
        <div className="w-[111px]">
          <div className={`h-[17px] w-[138px] rounded-tl pl-2 text-[15px] leading-[18px] font-bold text-white ${headBg} [clip-path:polygon(0_0,100%_0,86%_100%,0_100%)]`}>{title}</div>
          <label htmlFor={`${id}-q`} className="block h-5 pl-3 pt-px text-[15px] text-[#6c6c6c]">{freq ? 'Q' : ''}</label>
          <div className="pl-3"><Lcd id={`${id}-q`} value={q[0]} /></div>
        </div>
        <Knob label={`${title} level`} angle={q[1]} green={q.length > 2 ? [q[2], q[3]] : null} />
      </div>
      {freq && (
        <div className="relative flex h-20">
          <div className="w-20 ml-px"><Knob label={`${title} frequency`} angle={freq[1]} green={[freq[2], freq[3]]} /></div>
          <div>
            <label htmlFor={`${id}-f`} className="block h-[37px] pt-[15px] pl-[2px] text-[15px] font-bold text-[#848484]">FREQ</label>
            <Lcd id={`${id}-f`} value={freq[0]} />
          </div>
        </div>
      )}
      {gain && (
        <div className="relative flex h-[87px]">
          <div className="w-[96px] pl-[11px]">
            <label htmlFor={`${id}-g`} className="block h-12 pt-[27px] -ml-[3px] text-[15px] font-bold text-[#777]">GAIN</label>
            <Lcd id={`${id}-g`} value={gain[0]} />
          </div>
          <div className="ml-[11px] -mt-[7px]"><Knob label={`${title} gain`} angle={gain[1]} green={[gain[2], gain[3]]} cap={cap} /></div>
        </div>
      )}
      {freq && <InButton on={on} />}
      {shape && <ShapeButtons kind={shape} />}
      {phase && <button aria-label="Phase invert" className={`${ROUND} left-[85px] -top-[10px] bg-[#55525c] border-[#8a8a8a] text-white text-[20px] font-bold`}>Ø</button>}
    </div>
  );
}

function EqGraph() {
  const fx = (f) => 45 + (Math.log10(f / 20) / 3) * 576;
  const freqs = [20, 30, 40, 50, 60, 70, 80, 90, 100, 200, 300, 400, 500, 600, 700, 800, 900, 1000, 2000, 3000, 4000, 5000, 6000, 7000, 8000, 9000, 10000, 20000];
  const dbs = [['+18', 26], ['+12', 76], ['+6', 124], ['0', 171], ['-6', 219], ['-12', 267], ['-18', 318]];
  const xl = [['20', 45], ['50', 121], ['100', 179], ['500', 313], ['1k', 373], ['5k', 504], ['10k', 563], ['20k', 622]];
  const dots = [[165, 190, '#c0305c'], [268, 206, '#d87c20'], [350, 208, '#d8c01c'], [454, 160, '#28883c'], [527, 163, '#3868c8']];
  return (
    <svg viewBox="0 0 651 347" className="w-[651px] h-[347px] font-['DejaVu_Sans'] text-[12px]">
      <defs>
        <radialGradient id="glowA" gradientUnits="userSpaceOnUse" cx="10" cy="30" r="130"><stop offset="0" stopColor="#4a5a74" /><stop offset=".5" stopColor="#2a3648" stopOpacity=".6" /><stop offset="1" stopColor="#1a2230" stopOpacity="0" /></radialGradient>
        <radialGradient id="glowB" gradientUnits="userSpaceOnUse" cx="644" cy="340" r="140"><stop offset="0" stopColor="#2c3848" /><stop offset="1" stopColor="#2c3848" stopOpacity="0" /></radialGradient>
        <radialGradient id="shine" cx=".35" cy=".3"><stop offset="0" stopColor="#fff" stopOpacity=".9" /><stop offset=".5" stopColor="#fff" stopOpacity="0" /></radialGradient>
      </defs>
      <rect x="1" y="1" width="649" height="345" rx="9" fill="#000" stroke="#3a3a3a" strokeWidth="2" />
      <rect x="7" y="7" width="637" height="333" rx="5" fill="url(#glowA)" />
      <rect x="7" y="7" width="637" height="333" rx="5" fill="url(#glowB)" />
      <g stroke="#1d4a44" strokeWidth="1.500">
        {freqs.map((f) => <path key={f} d={`M${fx(f).toFixed(1)} 26V323`} />)}
        {dbs.map(([t, y]) => <path key={t} d={`M41 ${y}H621`} />)}
        <path d="M45 16V26M621 318H636" />
      </g>
      <path d="M45 190H110C145 190 150 178 190 171H45Z" fill="#5c0404" />
      <path d="M250 171C262 174 264 188 268 204C272 188 274 174 286 171Z" fill="#5c3c08" />
      <path d="M330 171C343 174 345 188 349 205C353 188 356 174 368 171Z" fill="#5c5408" />
      <path d="M373 171C420 167 440 160 454 160S490 167 512 166V171Z" fill="#083008" />
      <path d="M505 171V167C530 165 545 160 565 161L621 162V171Z" fill="#04045c" />
      <path d="M45 190H110C150 190 155 170 205 170H228C262 170 262 176 268 204C274 176 274 172 300 172H322C344 172 344 178 349 206C354 178 356 172 380 170C420 166 436 160 454 160C474 160 482 167 509 167C530 166 535 161 560 161L621 162" fill="none" stroke="#f0e8e4" strokeWidth="2" />
      {dots.map(([x, y, c]) => <g key={c}><circle cx={x} cy={y} r="5.500" fill={c} /><circle cx={x} cy={y} r="5.500" fill="url(#shine)" /></g>)}
      <g fill="#7ba873">
        <text x="35" y="20" textAnchor="end">dB</text>
        {dbs.map(([t, y]) => <text key={t} x="35" y={t === '+18' ? y + 7 : y + 3} textAnchor="end">{t}</text>)}
        {xl.map(([t, x]) => <text key={t} x={x} y="338" textAnchor="middle">{t}</text>)}
      </g>
    </svg>
  );
}

function MeterLine({ label }) {
  return (
    <div className="flex items-center h-4 text-[15px] text-[#5c5c5c]">
      <span className="w-[60px] flex items-center gap-[3px]">{label}<i className="flex-1 h-px bg-[#555]" /><i className="-ml-[6px] w-[6px] h-[6px] rounded-full bg-[#444]" /></span>
      <span className="ml-[5px] w-[321px] h-[9px] rounded bg-black border-y-2 border-[#111] border-b-[#555]" />
      <span className="ml-1 w-[14px] h-[9px] rounded bg-black" />
    </div>
  );
}

const DARK_BTN = 'bg-linear-to-b from-[#686868] to-[#505050] shadow-[0_0_0_1px_#2a2a2a,inset_0_1px_0_#808080]';

function Windows() {
  return <svg viewBox="0 0 18 16" className="w-[17px] h-[15px]" fill="none" stroke="#ddd" strokeWidth="1.500"><path d="M5 9H1V1H12V5M1 3H12M5 6H17V15H5ZM5 9H17" /></svg>;
}

function EqWindow() {
  const head = 'h-7 bg-linear-to-b from-[#5c5c5c] to-[#6a6a6a] border-t border-black flex items-center text-[16px] font-bold text-white';
  return (
    <section className="absolute left-[205px] top-[505px] w-[1116px] rounded-xl overflow-hidden bg-[#b2b2b2] shadow-[0_12px_40px_rgba(0,0,0,0.5)]">
      <div className="h-8 bg-[#e5e5e5] flex items-center gap-2 pl-[8px]">
        <button aria-label="Close" className="w-4 h-4 rounded-full bg-[#cbcbcb] border border-[#b8b8b8]" />
        <button aria-label="Minimise" className="w-4 h-4 rounded-full bg-[#cbcbcb] border border-[#b8b8b8]" />
      </div>
      <div className="h-[99px] flex bg-[#3b3b3b] text-[15px] font-bold text-white">
        <div className="w-[223px] border-r border-[#555]">
          <h2 className={`${head} pl-[15px]`}>Track</h2>
          <div className="flex gap-1 mt-[5px] pl-[13px]">
            <Picker label="Track" value="podcast1 - Mic 1" className={`w-[159px] h-[26px] ${DARK_BTN}`} text="text-white" arrow="fill-[#2c2c2c]" />
            <Picker label="Insert position" value="h" className={`w-[37px] h-[26px] ${DARK_BTN}`} text="text-white" arrow="fill-[#2c2c2c]" />
          </div>
          <div className="mt-1 pl-[13px]"><Picker label="Plug-in" value="EQ3 7-Band" className={`w-[200px] h-[26px] ${DARK_BTN}`} text="text-white" arrow="fill-[#2c2c2c]" /></div>
        </div>
        <div className="w-[202px] border-r border-[#555]">
          <h2 className={`${head} pl-3 pr-[9px] justify-between`}>Preset<Disclosure label="Preset options" size="w-[17px] h-[17px]" /></h2>
          <div className="mt-[5px] pl-[10px]"><Picker label="Preset" value="<factory default>" className={`w-[182px] h-[26px] ${DARK_BTN}`} text="text-white italic" arrow="fill-[#2c2c2c]" /></div>
          <div className="flex mt-1 pl-[10px]">
            <button className={`w-[26px] h-[26px] ${DARK_BTN}`}>-</button>
            <button className={`w-[26px] h-[26px] ${DARK_BTN}`}>+</button>
            <button aria-label="Copy settings" className={`w-[26px] h-[26px] flex items-center justify-center ${DARK_BTN}`}><Windows /></button>
            <button className="ml-[7px] w-[95px] h-[26px] rounded-[3px] border border-[#9cc0e8] bg-linear-to-b from-[#78a4d6] to-[#4f80b8]">COMPARE</button>
          </div>
        </div>
        <div className="w-[70px] border-r border-[#555]">
          <h2 className={`${head} justify-center`}>Auto</h2>
          <div className="flex flex-col gap-1 mt-[5px] pl-2 pr-[10px]">
            <button aria-label="Automation" className="h-[26px] flex items-center justify-center bg-linear-to-b from-[#777] to-[#8c8c8c]"><Windows /></button>
            <button className="h-[26px] rounded-[3px] border-2 border-[#6c6c6c] bg-[#3a3a3a]">SAFE</button>
          </div>
        </div>
        <div className="flex-1 border-r border-[#555]">
          <h2 className={head} />
          <div className="flex flex-col gap-1 mt-[5px] pl-[10px]">
            <button className="w-[81px] h-[26px] rounded-[3px] border-2 border-[#747474] bg-[#484848]">BYPASS</button>
            <button className="w-[81px] h-[26px] rounded-[3px] bg-[#444]">Native</button>
          </div>
        </div>
        <div className="w-[41px]">
          <h2 className={head} />
          <button aria-label="Target" className="mt-[4px] ml-[7px] w-[26px] h-[28px] rounded border-2 border-[#a01c1c] bg-[#e03030] flex items-center justify-center"><span className="w-4 h-4 bg-[#f8a8a8] flex items-center justify-center"><i className="w-2 h-2 border-2 border-[#c02020]" /></span></button>
        </div>
      </div>

      <div className="pt-[6px] pb-[52px] bg-linear-to-b from-[#b2b2b2] from-90% to-[#989898]">
        <div className="flex">
          <div className="ml-2 w-[443px]">
            <div className="h-[158px] mt-[3px] rounded-md bg-[#d9d9d9] pt-3">
              <div className="pl-[10px]"><MeterLine label="IN" /></div>
              <div className="h-[13px] pl-[73px] text-[12px] text-[#5c5c5c] font-bold"><div className="w-[324px] flex justify-between pl-1 pr-1"><span>-60</span><span>-32</span><span>-22</span><span>-16</span><span>-10</span><span>-6</span><span>-3</span><span>0</span></div></div>
              <div className="pl-[10px]"><MeterLine label="OUT" /></div>
              <div className="flex gap-2 mt-[14px] pl-[9px]">
                <EqBlock title="INPUT" headBg="bg-[#606060]" q={['0.0 dB', 62, 56, 64]} phase />
                <EqBlock title="OUTPUT" headBg="bg-[#606060]" q={['0.0 dB', 62, 56, 64]} />
              </div>
            </div>
            <div className="h-2 mx-[28px] bg-[#d9d9d9]" />
            <div className="h-[175px] rounded-md bg-[#d9d9d9] pt-[17px] pl-[9px] flex gap-2">
              <EqBlock title="HPF" headBg="bg-[#9c9c9c]" q={['6 dB/oct', -120]} freq={['20.0 Hz', -122, -124, -116]} shape="hpf" />
              <EqBlock title="LPF" headBg="bg-[#9c9c9c]" q={['6 dB/oct', -120]} freq={['20.00 kHz', 122, 116, 124]} shape="lpf" />
            </div>
            <div className="h-2 mx-[28px] bg-[#d9d9d9]" />
          </div>
          <div className="ml-[7px]"><EqGraph /></div>
        </div>
        <div className="mx-2 h-[270px] rounded-lg bg-[#d9d9d9] pt-[17px] pl-[9px] flex gap-2">
          {BANDS.map((b) => (
            <EqBlock key={b.name} title={b.name} headBg={b.bg} q={b.q} freq={b.freq} gain={b.gain} cap={b.cap} shape={b.shape} on />
          ))}
        </div>
      </div>
      <span className="absolute right-[20px] bottom-[14px] text-[20px] leading-6 text-white">EQ III</span>
    </section>
  );
}

export default function App() {
  return (
    <main className="relative w-full h-screen overflow-hidden flex bg-[#d9d9d9] leading-none font-['Liberation_Sans','Noto_Sans_CJK_TC',sans-serif]">
      <EditWindow />
      <EqWindow />
      <MixWindow />
    </main>
  );
}
